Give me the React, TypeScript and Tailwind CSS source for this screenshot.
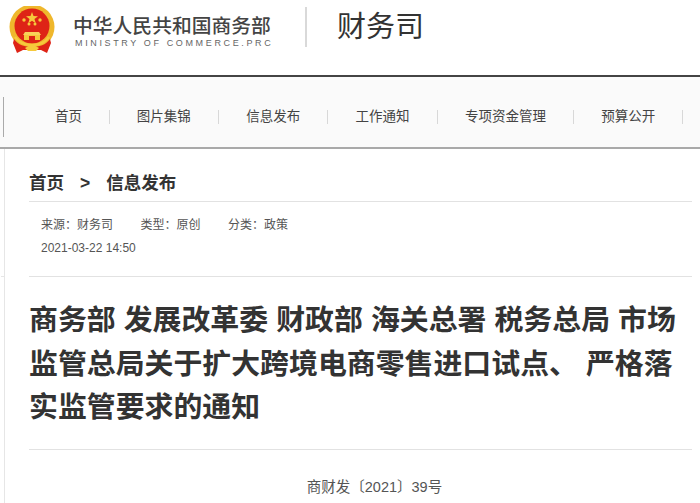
const cjk = "font-['Liberation_Sans','Noto_Sans_CJK_SC',sans-serif]";

function Emblem() {
  return (
    <svg width="46" height="48" viewBox="0 0 46 48" className="shrink-0">
      <circle cx="23" cy="21" r="22.5" fill="#efb72c" />
      <circle cx="23" cy="20" r="17.5" fill="#de2316" />
      <polygon
        points="23,6 24.5,10 29,10.2 25.5,13 26.7,17.3 23,14.8 19.3,17.3 20.5,13 17,10.2 21.5,10"
        fill="#f6c93c"
      />
      <circle cx="15" cy="14" r="1.7" fill="#f6c93c" />
      <circle cx="31" cy="14" r="1.7" fill="#f6c93c" />
      <circle cx="20" cy="18" r="1.5" fill="#f6c93c" />
      <circle cx="26" cy="18" r="1.5" fill="#f6c93c" />
      <path d="M16 26h14l2 3H14z" fill="#f8d35a" />
      <rect x="15" y="29" width="16" height="5" fill="#f6c93c" />
      <rect x="20" y="30" width="6" height="4" fill="#de2316" />
      <path d="M5 33c4 6 11 8 18 8s14-2 18-8l1 4-4 10-6-3H14l-6 3-4-10z" fill="#de2316" />
      <path d="M6 31c4 6 10 8 17 8s13-2 17-8" fill="none" stroke="#f6c93c" strokeWidth="2.4" />
      <path d="M16 42l7-4 7 4-3 3h-8z" fill="#f6c93c" />
    </svg>
  );
}

const navItems = ["图片集锦", "信息发布", "工作通知", "专项资金管理", "预算公开"];

export default function App() {
  return (
    <div className={`h-[503px] w-[700px] overflow-hidden bg-white ${cjk}`}>
      <header className="flex h-[75px] items-start pl-[9px]">
        <div className="mt-[6px]">
          <Emblem />
        </div>
        <div className="ml-[18px] mt-[14px] w-[200px]">
          <div className="text-[19.8px] leading-[24px] font-medium text-[#444]">中华人民共和国商务部</div>
          <div className="pl-[2px] text-[9px] leading-[10px] tracking-[2.63px] whitespace-nowrap text-[#666]">
            MINISTRY OF COMMERCE.PRC
          </div>
        </div>
        <div className="mt-[7px] ml-[32px] h-[40px] w-[2px] bg-[#d9d9d9]" />
        <div className="ml-[30px] mt-[8px] text-[29px] leading-[38px] text-[#333]">财务司</div>
      </header>

      <nav className="flex h-[74px] items-center border-t-2 border-b-2 border-t-[#444] border-b-[#a9a9a9] bg-[#fafafa] pt-[10px] pl-[3px]">
        <div className="h-[40px] w-px bg-[#aaa]" />
        <ul className="flex items-center pl-[24px] text-[13.5px] text-[#444]">
          <li className="border-r border-[#d8d8d8] py-0 pr-[26.6px] pl-[27px] leading-[14px]">首页</li>
          {navItems.map((item) => (
            <li key={item} className="border-r border-[#d8d8d8] px-[27.2px] leading-[14px]">
              {item}
            </li>
          ))}
        </ul>
      </nav>

      <main className="relative ml-[4px] h-[355px] border-l border-[#e6e6e6] pr-[8px] pl-[24px]">
        <div className="absolute top-[127px] left-[-4px] h-px w-[4px] bg-[#e6e6e6]" />
        <div className="flex h-[53px] items-center gap-[16px] border-b border-[#e2e2e2] pt-[17px] text-[17.5px] font-bold text-[#333]">
          <span>首页</span>
          <span>&gt;</span>
          <span>信息发布</span>
        </div>
        <div className="h-[75px] border-b border-[#e2e2e2] pt-[12px] pl-[12px] text-[12px] leading-[23px] text-[#555]">
          <div className="flex gap-[27.5px]">
            <span>来源：财务司</span>
            <span>类型：原创</span>
            <span>分类：政策</span>
          </div>
          <div>2021-03-22 14:50</div>
        </div>
        <h1 className="mt-[22px] h-[151px] border-b border-[#e2e2e2] text-[28.9px] leading-[43.5px] font-bold text-[#333]">
          商务部 发展改革委 财政部 海关总署 税务总局 市场监管总局关于扩大跨境电商零售进口试点、 严格落实监管要求的通知
        </h1>
        <p className="mt-[27px] indent-[28px] text-center text-[14.5px] leading-[20px] text-[#555]">商财发〔2021〕39号</p>
      </main>
    </div>
  );
}
